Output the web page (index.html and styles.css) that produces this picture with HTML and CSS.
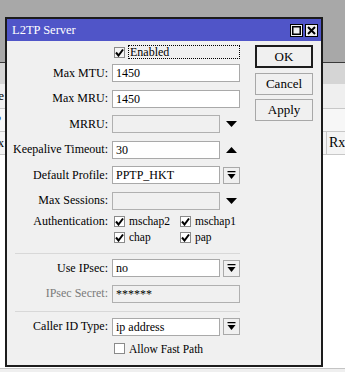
FILE: index.html
```html
<!DOCTYPE html>
<html lang="en">

<head>
    <meta charset="UTF-8">
    <title>L2TP Server</title>
    <link rel="stylesheet" href="styles.css">
</head>

<body>
    <!-- window behind the dialog -->
    <div class="desk"></div>
    <div class="backwin">
        <div class="bar1"></div>
        <div class="bar2"><span class="cut">re</span></div>
        <div class="bar3"><span class="cut blue">P</span></div>
        <div class="thead">
            <span class="th first">x</span>
            <span class="th rx">Rx</span>
        </div>
        <div class="tbody"></div>
    </div>
    <div class="bottomline"></div>

    <!-- L2TP Server dialog -->
    <div class="dialog">
        <div class="titlebar">
            <span class="title">L2TP Server</span>
            <span class="tbtn">
                <svg width="9" height="9" viewBox="0 0 9 9"><rect x="0.75" y="0.75" width="7.5" height="7.5" fill="none" stroke="#000" stroke-width="1.5"/></svg>
            </span>
            <span class="tbtn">
                <svg width="9" height="9" viewBox="0 0 9 9"><path d="M1 1 L8 8 M8 1 L1 8" stroke="#000" stroke-width="2"/></svg>
            </span>
        </div>

        <div class="dbody">
            <div class="form">
                <div class="row enabled-row">
                    <span></span>
                    <div class="focus">
                        <span class="cb on"><svg width="9" height="9" viewBox="0 0 9 9"><path d="M1 4.5 L3.5 7.5 L8 1.5" fill="none" stroke="#000" stroke-width="2"/></svg></span>
                        <span>Enabled</span>
                    </div>
                </div>

                <div class="row">
                    <label>Max MTU:</label>
                    <div class="field"><div class="inp">1450</div></div>
                </div>
                <div class="row">
                    <label>Max MRU:</label>
                    <div class="field"><div class="inp">1450</div></div>
                </div>
                <div class="row">
                    <label>MRRU:</label>
                    <div class="field">
                        <div class="inp off"></div>
                        <span class="arrow"><svg width="11" height="6" viewBox="0 0 11 6"><path d="M0 0 H11 L5.5 6 Z"/></svg></span>
                    </div>
                </div>
                <div class="row">
                    <label>Keepalive Timeout:</label>
                    <div class="field">
                        <div class="inp">30</div>
                        <span class="arrow"><svg width="11" height="6" viewBox="0 0 11 6"><path d="M0 6 H11 L5.5 0 Z"/></svg></span>
                    </div>
                </div>
                <div class="row">
                    <label>Default Profile:</label>
                    <div class="field">
                        <div class="inp">PPTP_HKT</div>
                        <span class="ddbtn"><svg width="9" height="9" viewBox="0 0 9 9"><path d="M0.5 0.5 H8.5" stroke="#000" stroke-width="1.5"/><path d="M0.5 3 H8.5 L4.5 8 Z"/></svg></span>
                    </div>
                </div>
                <div class="row">
                    <label>Max Sessions:</label>
                    <div class="field">
                        <div class="inp off"></div>
                        <span class="arrow"><svg width="11" height="6" viewBox="0 0 11 6"><path d="M0 0 H11 L5.5 6 Z"/></svg></span>
                    </div>
                </div>

                <div class="row auth-row">
                    <label>Authentication:</label>
                    <div class="auth">
                        <span class="opt"><span class="cb"><svg width="9" height="9" viewBox="0 0 9 9"><path d="M1 4.5 L3.5 7.5 L8 1.5" fill="none" stroke="#000" stroke-width="2"/></svg></span>mschap2</span>
                        <span class="opt"><span class="cb"><svg width="9" height="9" viewBox="0 0 9 9"><path d="M1 4.5 L3.5 7.5 L8 1.5" fill="none" stroke="#000" stroke-width="2"/></svg></span>mschap1</span>
                        <span class="opt"><span class="cb"><svg width="9" height="9" viewBox="0 0 9 9"><path d="M1 4.5 L3.5 7.5 L8 1.5" fill="none" stroke="#000" stroke-width="2"/></svg></span>chap</span>
                        <span class="opt"><span class="cb"><svg width="9" height="9" viewBox="0 0 9 9"><path d="M1 4.5 L3.5 7.5 L8 1.5" fill="none" stroke="#000" stroke-width="2"/></svg></span>pap</span>
                    </div>
                </div>

                <div class="sep"></div>

                <div class="row">
                    <label>Use IPsec:</label>
                    <div class="field">
                        <div class="inp">no</div>
                        <span class="ddbtn"><svg width="9" height="9" viewBox="0 0 9 9"><path d="M0.5 0.5 H8.5" stroke="#000" stroke-width="1.5"/><path d="M0.5 3 H8.5 L4.5 8 Z"/></svg></span>
                    </div>
                </div>
                <div class="row secret-row">
                    <label class="dim">IPsec Secret:</label>
                    <div class="field"><div class="inp off">******</div></div>
                </div>

                <div class="sep sep2"></div>

                <div class="row caller-row">
                    <label>Caller ID Type:</label>
                    <div class="field">
                        <div class="inp">ip address</div>
                        <span class="ddbtn"><svg width="9" height="9" viewBox="0 0 9 9"><path d="M0.5 0.5 H8.5" stroke="#000" stroke-width="1.5"/><path d="M0.5 3 H8.5 L4.5 8 Z"/></svg></span>
                    </div>
                </div>
                <div class="row fast-row">
                    <span></span>
                    <span class="opt"><span class="cb"></span>Allow Fast Path</span>
                </div>
            </div>

            <div class="buttons">
                <button class="btn default">OK</button>
                <button class="btn">Cancel</button>
                <button class="btn">Apply</button>
            </div>
        </div>
    </div>
</body>

</html>
```

FILE: styles.css
```css
/* general */

body {
    margin: 0;
    background: #ffffff;
    font-family: 'Liberation Serif', 'Times New Roman', serif;
    font-size: 12px;
    color: #000;
    height: 372px;
    overflow: hidden;
    position: relative;
}

/* window behind */

.desk {
    height: 62px;
    background: #a8a8a8;
    border-bottom: 1px solid #3a3a3a;
}

.bar1 {
    height: 21px;
    background: #d5d5d5;
}

.bar2 {
    height: 24px;
    background: #efefef;
    border-bottom: 1px solid #c8c8c8;
}

.bar3 {
    height: 22px;
    background: #f7f7f7;
    border-bottom: 1px solid #c8c8c8;
}

.cut {
    display: inline-block;
    margin-left: -6px;
    line-height: 24px;
    font-size: 13px;
}

.blue {
    color: #2c4fb0;
    line-height: 22px;
}

.thead {
    display: flex;
    height: 22px;
    background: #f4f4f4;
    border-bottom: 1px solid #c8c8c8;
    line-height: 22px;
}

.th {
    border-right: 1px solid #c8c8c8;
}

.th.first {
    width: 0;
    overflow: visible;
    margin-left: -2px;
    margin-right: 328px;
    border: none;
    font-size: 12px;
}

.th.rx {
    border-left: 1px solid #c8c8c8;
    padding-left: 2px;
    width: 30px;
    font-size: 14px;
}

.tbody {
    height: 210px;
    background: #fff;
}

.bottomline {
    position: absolute;
    left: 0;
    right: 0;
    top: 368px;
    height: 4px;
    background: #efefef;
    border-top: 1px solid #c4c4c4;
}

/* dialog */

.dialog {
    position: absolute;
    left: 5px;
    top: 17px;
    width: 314px;
    height: 346px;
    border: 2px solid #1c1c1c;
    background: #f0f0f0;
}

.titlebar {
    height: 22px;
    background: #5055c8;
    display: flex;
    align-items: center;
    padding: 0 3px 0 5px;
    gap: 2px;
}

.title {
    flex: 1;
    color: #fff;
    font-size: 12.5px;
}

.tbtn {
    width: 11px;
    height: 11px;
    background: #f0f0f0;
    border: 1px solid #000;
    display: flex;
    align-items: center;
    justify-content: center;
}

.dbody {
    display: flex;
    padding: 4px 0 0 0;
}

.form {
    width: 233px;
    display: flex;
    flex-direction: column;
}

.row {
    display: grid;
    grid-template-columns: 101px 128px;
    column-gap: 4px;
    height: 18px;
    margin-bottom: 7.5px;
    align-items: center;
}

.row label {
    text-align: right;
    white-space: nowrap;
}

.dim {
    color: #7a7a7a;
}

.enabled-row {
    height: 14px;
    margin-bottom: 5px;
}

.focus {
    display: flex;
    align-items: center;
    gap: 3px;
    height: 12px;
    margin-left: 2px;
}

.focus span:last-child {
    flex: 1;
    border: 1px dotted #000;
    height: 12px;
    line-height: 12px;
    padding-left: 1px;
}

.field {
    display: flex;
    align-items: center;
    height: 18px;
}

.inp {
    flex: 1;
    height: 16px;
    background: #fff;
    border: 1px solid #a9a9a9;
    padding-left: 3px;
    line-height: 16px;
    font-size: 12px;
}

.inp.off {
    background: #f0f0f0;
    border-color: #b0b0b0;
}

.arrow {
    width: 17px;
    margin-left: 3px;
    display: flex;
    justify-content: center;
}

.ddbtn {
    width: 15px;
    height: 15px;
    margin-left: 3px;
    border: 1px solid #a9a9a9;
    background: #f0f0f0;
    display: flex;
    align-items: center;
    justify-content: center;
}

/* checkboxes */

.cb {
    width: 11px;
    height: 11px;
    box-sizing: border-box;
    border: 1px solid #8a8a8a;
    background: #fff;
    display: inline-flex;
    align-items: center;
    justify-content: center;
    margin-right: 4px;
}

.cb.on {
    margin-right: 0;
    background: #f4f4f4;
}

.auth-row {
    height: 32px;
    margin-top: -4px;
    margin-bottom: 7.5px;
    align-items: start;
}

.auth-row label {
    line-height: 16px;
}

.auth {
    display: grid;
    grid-template-columns: 66px 60px;
    grid-auto-rows: 16px;
    padding-left: 2px;
    font-size: 11.5px;
}

.opt {
    display: flex;
    align-items: center;
    white-space: nowrap;
}

.sep {
    height: 1px;
    background: #d8d8d8;
    margin: 0 0 5.5px 8px;
    width: 225px;
}

.secret-row {
    margin-bottom: 8px;
}

.sep2 {
    margin-bottom: 6px;
}

.caller-row {
    margin-bottom: 4px;
}

.fast-row .opt {
    padding-left: 2px;
    font-size: 11.5px;
}

/* buttons */

.buttons {
    display: flex;
    flex-direction: column;
    gap: 4px;
    margin-left: 15px;
    width: 58px;
}

.btn {
    height: 22px;
    font-family: 'Liberation Serif', 'Times New Roman', serif;
    font-size: 13px;
    background: #f0f0f0;
    border: 1px solid #a8a8a8;
    padding: 0;
    color: #000;
}

.btn.default {
    height: 23px;
    border: 2px solid #1c1c1c;
    margin-bottom: 1px;
}
```
